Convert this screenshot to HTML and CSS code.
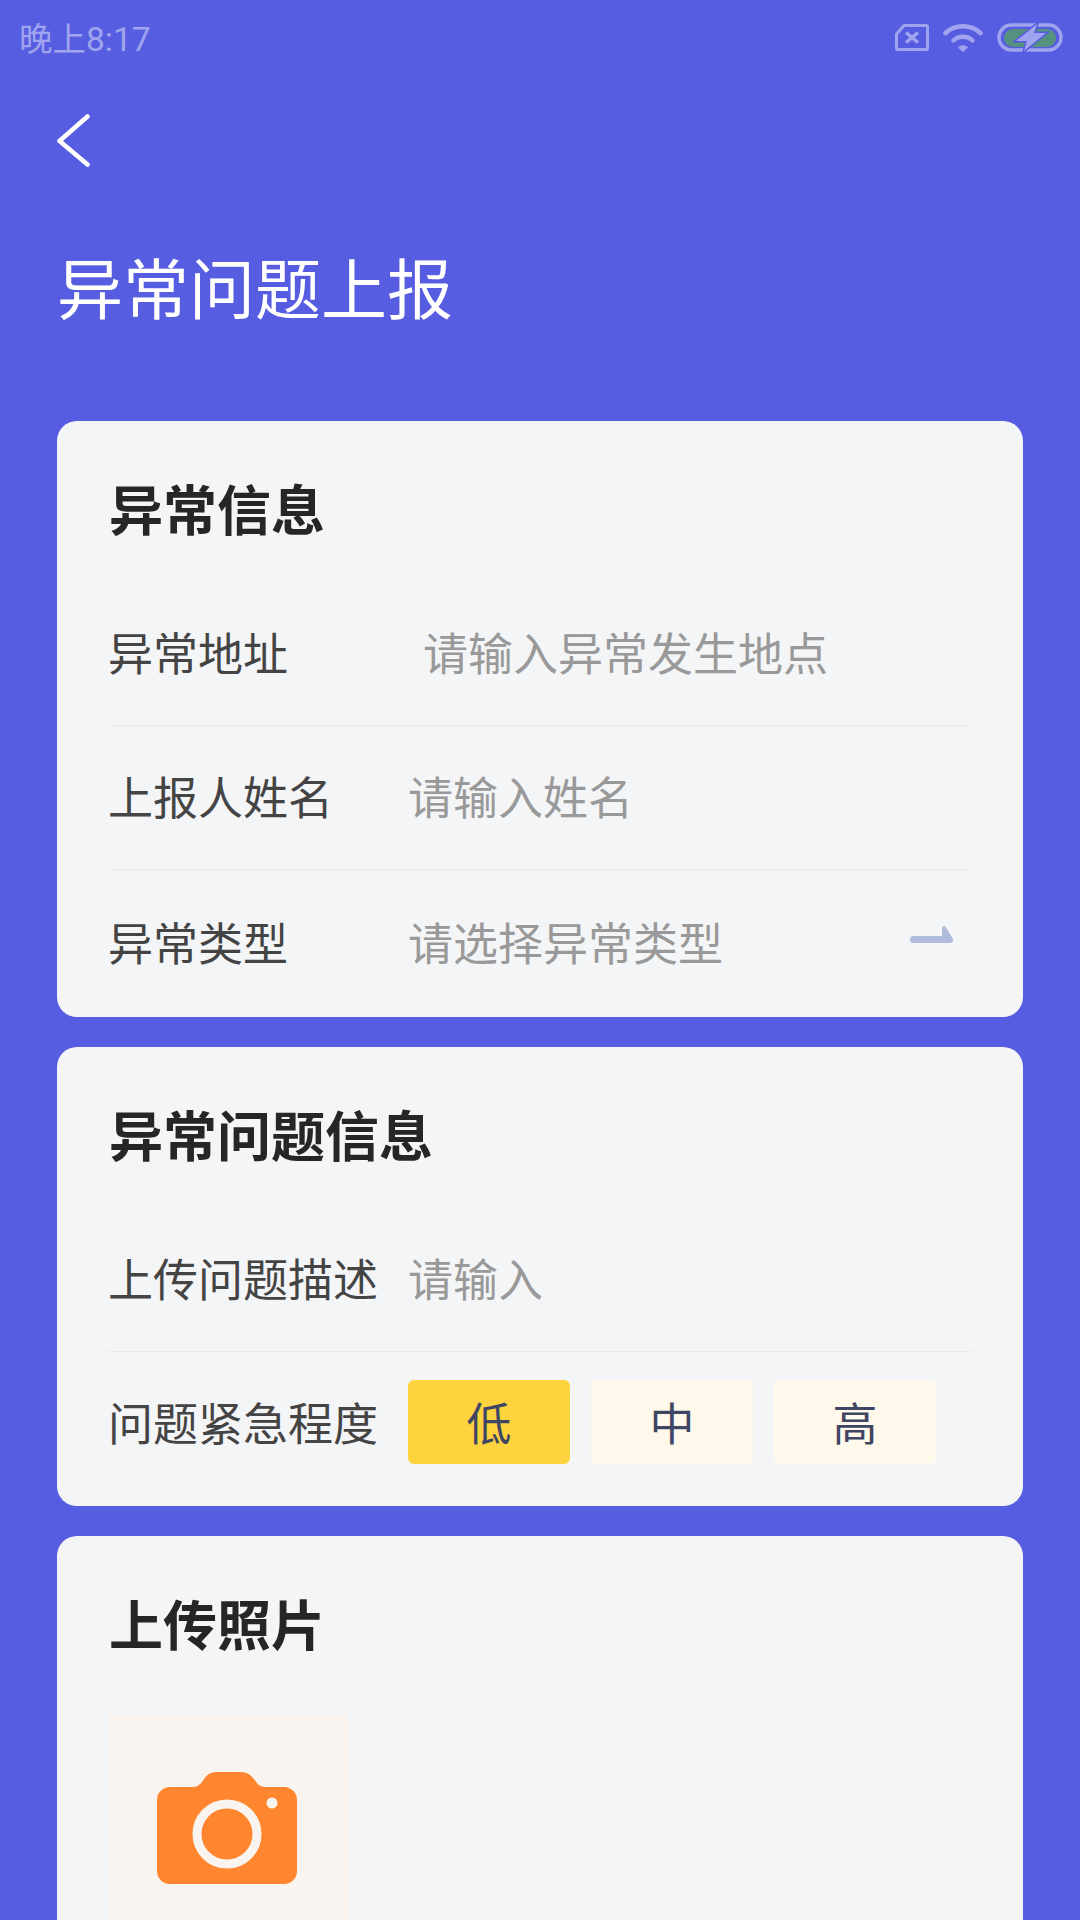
FILE: index.html
```html
<!DOCTYPE html>
<html lang="zh-CN">
<head>
	<meta charset="UTF-8">
	<title>异常问题上报</title>
	<link rel="stylesheet" href="styles.css">
</head>
<body>
	<div class="page">
		<!-- 状态栏 -->
		<div class="status-bar">
			<span class="status-time">晚上8:17</span>
			<div class="status-icons">
				<svg class="icon-sim" viewBox="0 0 34 27"><path d="M9 1.500H31a1.500 1.500 0 0 1 1.500 1.500V24a1.500 1.500 0 0 1-1.500 1.500H3A1.500 1.500 0 0 1 1.500 24V10z" fill="none" stroke="#a0a4ee" stroke-width="3" stroke-linejoin="round"/><path d="M11 8.500l12 10M23 8.500L11 18.500" fill="none" stroke="#a0a4ee" stroke-width="3.500"/></svg>
				<svg class="icon-wifi" viewBox="0 0 40 29"><path d="M2.500 10C12 1 28 1 37.500 10" fill="none" stroke="#a0a4ee" stroke-width="4.500" stroke-linecap="round"/><path d="M10.500 17.500C15.500 12.500 24.500 12.500 29.500 17.500" fill="none" stroke="#a0a4ee" stroke-width="4.500" stroke-linecap="round"/><path d="M15 24.500C17.500 21.500 22.500 21.500 25 24.500L20 29z" fill="#a0a4ee"/></svg>
				<svg class="icon-battery" viewBox="0 0 66 29"><rect x="2" y="2" width="62" height="25" rx="12.500" fill="none" stroke="#a0a4ee" stroke-width="3.500"/><rect x="7" y="6" width="52" height="18" rx="9" fill="#54917f"/><path d="M40 1L19 18H30L27 28L49 10H37z" fill="#a0a4ee" stroke="#565de0" stroke-width="3" paint-order="stroke"/></svg>
			</div>
		</div>

		<!-- 标题 -->
		<div class="header">
			<svg class="back" viewBox="0 0 36 56"><path d="M30.500 3.500L2.500 28l28 23.500" fill="none" stroke="#fff" stroke-width="4.500" stroke-linecap="round" stroke-linejoin="round"/></svg>
			<h1 class="page-title">异常问题上报</h1>
		</div>

		<div class="card">
			<h2 class="card-title">异常信息</h2>
			<div class="row">
				<span class="label">异常地址</span>
				<span class="placeholder placeholder-addr">请输入异常发生地点</span>
			</div>
			<div class="row">
				<span class="label">上报人姓名</span>
				<span class="placeholder">请输入姓名</span>
			</div>
			<div class="row row-select">
				<span class="label">异常类型</span>
				<span class="placeholder">请选择异常类型</span>
				<svg class="select-arrow" viewBox="0 0 44 19"><path d="M3.500 11H32V3a2 2 0 0 1 3.500-1.200L42.500 13a3 3 0 0 1-2.500 5H3.500a3.500 3.500 0 0 1 0-7z" fill="#b0bcdc"/></svg>
			</div>
		</div>

		<div class="card">
			<h2 class="card-title">异常问题信息</h2>
			<div class="row">
				<span class="label">上传问题描述</span>
				<span class="placeholder">请输入</span>
			</div>
			<div class="row row-level">
				<span class="label">问题紧急程度</span>
				<div class="levels">
					<span class="level active">低</span>
					<span class="level">中</span>
					<span class="level">高</span>
				</div>
			</div>
		</div>

		<div class="card">
			<h2 class="card-title">上传照片</h2>
			<div class="photo-add">
				<svg class="camera" viewBox="0 0 140 112"><path d="M13 15H35C40 15 43 13 46 8.500 49.500 3 53 0 60 0H84C90 0 94 3 98 8.500 101 13 104 15 109 15H127A13 13 0 0 1 140 28V99A13 13 0 0 1 127 112H13A13 13 0 0 1 0 99V28A13 13 0 0 1 13 15z" fill="#ff862e"/><circle cx="70" cy="62" r="30" fill="none" stroke="#f9f4ef" stroke-width="9"/><circle cx="115" cy="31" r="5.500" fill="#f9f4ef"/></svg>
			</div>
		</div>
	</div>
</body>
</html>
```
FILE: styles.css
```css
*{margin: 0;padding: 0;box-sizing: border-box;}
html,body{height: 1920px;overflow: hidden;}
body{background-color: #565de0;font-family: "Noto Sans CJK SC", "Noto Sans", sans-serif;color: #333;}

.page{height: 1920px;overflow: hidden;}

.status-bar{height: 74px;padding: 0 17px 0 19px;display: flex;align-items: center;justify-content: space-between;}
.status-time{font-family: Roboto, "Noto Sans CJK SC", sans-serif;font-size: 33.500px;padding-bottom: 2px;color: #a0a4ee;}
.status-icons{display: flex;align-items: center;}
.icon-sim{width: 34px;height: 27px;display: block;}
.icon-wifi{width: 40px;height: 29px;display: block;margin-left: 14px;}
.icon-battery{width: 66px;height: 29px;display: block;margin-left: 14px;}

.header{padding: 39px 0 0 57px;height: 347px;}
.back{width: 36px;height: 56px;display: block;}
.page-title{font-size: 66px;font-weight: 400;line-height: 90px;color: #fff;margin-top: 71px;}

.card{width: 966px;margin: 0 0 30px 57px;padding: 54px 51px 0;background-color: #f4f5f7;border-radius: 20px;}
.card-title{font-size: 54px;line-height: 66px;font-weight: 700;color: #262626;padding-left: 1px;margin-bottom: 41px;}

.row{display: flex;align-items: center;height: 144px;padding-bottom: 4px;border-bottom: 1px solid #e9eaee;}
.row:last-child{border-bottom: 0;}
.label{width: 300px;font-size: 45px;color: #444;flex-shrink: 0;}
.placeholder{font-size: 45px;color: #999;}
.placeholder-addr{margin-left: 15px;}

.row-select{height: 147px;position: relative;}
.select-arrow{width: 44px;height: 19px;position: absolute;top: 55px;right: 18px;}

.row-level{height: 154px;align-items: flex-start;padding: 28px 0 0;}
.row-level .label{line-height: 84px;}
.levels{display: flex;gap: 21px;}
.level{width: 162px;height: 84px;padding-bottom: 1px;display: flex;align-items: center;justify-content: center;font-size: 45px;color: #3f4663;background-color: #fff9ec;border-radius: 6px;}
.level.active{background-color: #ffd33d;}

.photo-add{width: 241px;height: 240px;padding: 58px 0 0 49px;margin-top: 58px;background-color: #f9f4ef;}
.camera{width: 140px;height: 112px;display: block;}
```
